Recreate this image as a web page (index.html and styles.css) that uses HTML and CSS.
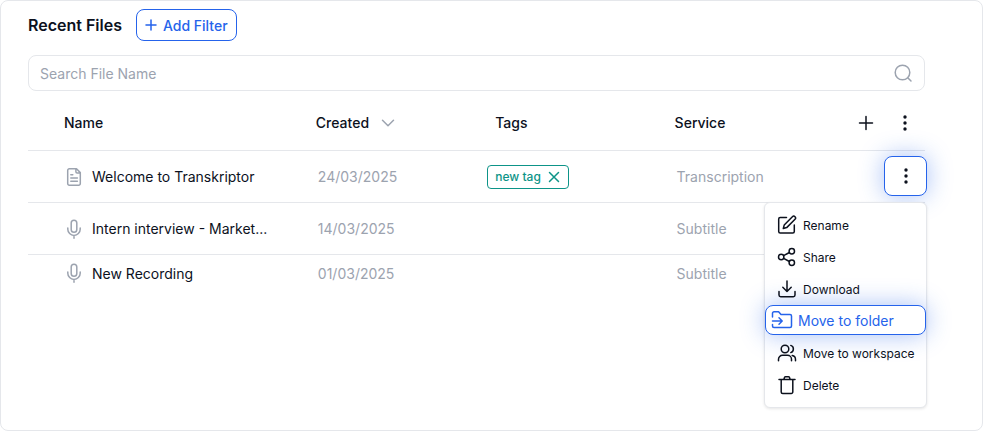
FILE: index.html
```html
<!DOCTYPE html>
<html lang="en">

<head>
    <meta charset="UTF-8">
    <meta name="viewport" content="width=device-width, initial-scale=1.0">
    <title>Recent Files</title>
    <link rel="stylesheet" href="styles.css">
</head>

<body>
    <main class="panel">
        <div class="toolbar">
            <h2>Recent Files</h2>
            <button class="filter-button" type="button">
                <svg class="icon" width="12" height="12" viewBox="0 0 12 12"><path d="M6 1v10M1 6h10"/></svg>
                Add Filter
            </button>
        </div>

        <div class="search">
            <input type="text" id="search" placeholder="Search File Name" aria-label="Search File Name">
            <svg class="icon" width="20" height="20" viewBox="0 0 20 20"><circle cx="9.5" cy="9.5" r="7.3"/><path d="M15 15l3 3"/></svg>
        </div>

        <table class="files">
            <colgroup>
                <col>
                <col class="col-data">
                <col class="col-data">
                <col class="col-data">
                <col class="col-actions">
            </colgroup>
            <thead>
                <tr>
                    <th class="name-head">Name</th>
                    <th>
                        <span class="sort">Created
                            <svg class="icon" width="14" height="8" viewBox="0 0 14 8"><path d="M1.5 1.2L7 6.7l5.5-5.5"/></svg>
                        </span>
                    </th>
                    <th>Tags</th>
                    <th>Service</th>
                    <th class="actions-cell">
                        <div class="actions">
                            <button class="icon-button" type="button" aria-label="Add column">
                                <svg class="icon" width="16" height="16" viewBox="0 0 16 16"><path d="M8 1.5v13M1.5 8h13"/></svg>
                            </button>
                            <button class="icon-button" type="button" aria-label="Table options">
                                <svg class="dots" width="4" height="16" viewBox="0 0 4 16"><circle cx="2" cy="2" r="1.7"/><circle cx="2" cy="8" r="1.7"/><circle cx="2" cy="14" r="1.7"/></svg>
                            </button>
                        </div>
                    </th>
                </tr>
            </thead>
            <tbody>
                <tr>
                    <td class="name-cell">
                        <div class="file">
                            <svg class="icon" width="20" height="20" viewBox="0 0 20 20"><path d="M12.5 1.8H5.3a1.6 1.6 0 0 0-1.6 1.6v13.2a1.6 1.6 0 0 0 1.6 1.6h9.4a1.6 1.6 0 0 0 1.6-1.6V5.6zM11.9 1.8V4.8a1.2 1.2 0 0 0 1.2 1.2h3.2M6.8 7.8h2M6.8 11h6.6M6.8 14.2h6.6"/></svg>
                            <span>Welcome to Transkriptor</span>
                        </div>
                    </td>
                    <td>24/03/2025</td>
                    <td class="tag-cell">
                        <span class="tag">new tag
                            <button type="button" aria-label="Remove tag">
                                <svg class="icon" width="12" height="12" viewBox="0 0 12 12"><path d="M1.5 1.5l9 9M10.5 1.5l-9 9"/></svg>
                            </button>
                        </span>
                    </td>
                    <td>Transcription</td>
                    <td class="actions-cell">
                        <div class="actions">
                            <button class="more-button" type="button" aria-label="File options">
                                <svg class="dots" width="4" height="16" viewBox="0 0 4 16"><circle cx="2" cy="2" r="1.7"/><circle cx="2" cy="8" r="1.7"/><circle cx="2" cy="14" r="1.7"/></svg>
                            </button>
                        </div>
                        <div class="menu">
                            <button type="button">
                                <svg class="icon" width="20" height="20" viewBox="0 0 20 20"><path d="M9.5 2.5H3.2A1.5 1.5 0 0 0 1.7 4v12.5A1.5 1.5 0 0 0 3.2 18h12.6a1.5 1.5 0 0 0 1.5-1.5V10M15.4 1.7a1.8 1.8 0 0 1 2.6 2.6l-8.3 8.3-3.4.9.9-3.4z"/></svg>
                                Rename
                            </button>
                            <button type="button">
                                <svg class="icon" width="20" height="20" viewBox="0 0 20 20"><circle cx="4.2" cy="10" r="2.7"/><circle cx="14.8" cy="4.2" r="2.7"/><circle cx="14.8" cy="15.8" r="2.7"/><path d="M6.6 8.7l5.8-3.2M6.6 11.3l5.8 3.2"/></svg>
                                Share
                            </button>
                            <button type="button">
                                <svg class="icon" width="20" height="20" viewBox="0 0 20 20"><path d="M10 2v10.500M5.800 8.300l4.200 4.200 4.200-4.200M2 12.500v3.600A1.700 1.700 0 0 0 3.700 17.800h12.600a1.700 1.700 0 0 0 1.700-1.700v-3.600"/></svg>
                                Download
                            </button>
                            <button class="active" type="button">
                                <svg class="icon" width="22" height="20" viewBox="0 0 22 20"><path d="M1.5 7V3.3a1.5 1.5 0 0 1 1.5-1.5h4.6L10 4.600h9a1.500 1.500 0 0 1 1.500 1.500v10a1.500 1.500 0 0 1-1.500 1.500H3a1.500 1.500 0 0 1-1.500-1.500V14.500M1.500 11h9.500M8 7.800l3.200 3.200L8 14.200"/></svg>
                                Move to folder
                            </button>
                            <button type="button">
                                <svg class="icon" width="20" height="20" viewBox="0 0 20 20"><circle cx="8" cy="6" r="3.8"/><path d="M1.5 17.8v-1.500a4 4 0 0 1 4-4h5a4 4 0 0 1 4 4v1.500M13.800 2.400a3.800 3.800 0 0 1 0 7.200M15.200 12.400a4 4 0 0 1 3.300 4v1.400"/></svg>
                                Move to workspace
                            </button>
                            <button type="button">
                                <svg class="icon" width="20" height="20" viewBox="0 0 20 20"><path d="M2 4.500h16M4.200 4.500v12.400A1.500 1.500 0 0 0 5.700 18.400h8.600a1.500 1.500 0 0 0 1.500-1.500V4.500M6.800 4.500l.8-2.200a1 1 0 0 1 .9-.6h3a1 1 0 0 1 .9.600l.8 2.200"/></svg>
                                Delete
                            </button>
                        </div>
                    </td>
                </tr>
                <tr>
                    <td class="name-cell">
                        <div class="file">
                            <svg class="icon" width="20" height="20" viewBox="0 0 20 20"><rect x="7.2" y="1.2" width="5.6" height="12" rx="2.8"/><path d="M3.8 9v1.2a6.2 6.2 0 0 0 12.4 0V9M10 16.4v2.8"/></svg>
                            <span>Intern interview - Market...</span>
                        </div>
                    </td>
                    <td>14/03/2025</td>
                    <td></td>
                    <td>Subtitle</td>
                    <td></td>
                </tr>
                <tr>
                    <td class="name-cell">
                        <div class="file">
                            <svg class="icon" width="20" height="20" viewBox="0 0 20 20"><rect x="7.2" y="1.2" width="5.6" height="12" rx="2.8"/><path d="M3.8 9v1.2a6.2 6.2 0 0 0 12.4 0V9M10 16.4v2.8"/></svg>
                            <span>New Recording</span>
                        </div>
                    </td>
                    <td>01/03/2025</td>
                    <td></td>
                    <td>Subtitle</td>
                    <td></td>
                </tr>
            </tbody>
        </table>
    </main>
</body>

</html>
```

FILE: styles.css
```css
* {
    box-sizing: border-box;
}

body {
    margin: 0;
    font-family: Inter, sans-serif;
    font-size: 14px;
    color: #0c111d;
    background-color: #fff;
}

button,
input {
    font: inherit;
    color: inherit;
}

button {
    padding: 0;
    border: none;
    background: none;
    cursor: pointer;
}

.icon {
    flex: none;
    fill: none;
    stroke: currentColor;
    stroke-width: 1.5;
    stroke-linecap: round;
    stroke-linejoin: round;
}

.dots {
    fill: currentColor;
}

.panel {
    min-height: 100vh;
    padding: 8px 57px 20px 27px;
    border: 1px solid #e5e7eb;
    border-radius: 8px;
}

.toolbar {
    display: flex;
    align-items: center;
    gap: 14px;
    margin-bottom: 14px;
}

h2 {
    margin: 0;
    font-size: 16px;
    font-weight: 600;
}

.filter-button {
    display: flex;
    align-items: center;
    gap: 6px;
    height: 32px;
    padding: 0 8px;
    border: 1px solid #2563eb;
    border-radius: 8px;
    color: #2563eb;
    font-weight: 500;
}

.search {
    display: flex;
    align-items: center;
    height: 36px;
    padding: 0 11px;
    border: 1px solid #e5e7eb;
    border-radius: 8px;
    color: #9ca3af;
}

.search input {
    flex: 1;
    min-width: 0;
    padding: 0;
    border: none;
    outline: none;
    background: none;
    color: #0c111d;
}

.search input::placeholder {
    color: #9ca3af;
    opacity: 1;
}

.files {
    width: 100%;
    margin-top: 4px;
    table-layout: fixed;
    border-collapse: separate;
    border-spacing: 0;
}

.col-data {
    width: 20%;
}

.col-actions {
    width: 79px;
}

th,
td {
    height: 52px;
    padding: 0 10px;
    border-bottom: 1px solid #e5e7eb;
    text-align: left;
    color: #9ca3af;
}

th {
    height: 56px;
    padding: 0 8px;
    font-weight: 500;
    color: #0c111d;
}

tbody tr:last-child td {
    height: 36px;
    border-bottom: none;
}

.name-head,
.name-cell {
    padding: 0 0 0 36px;
}

.tag-cell {
    padding: 0;
}

.sort {
    display: flex;
    align-items: center;
    gap: 12px;
}

.sort .icon {
    color: #9ca3af;
}

.file {
    display: flex;
    align-items: center;
    gap: 8px;
    color: #9ca3af;
}

.file span {
    color: #0c111d;
}

.tag {
    display: inline-flex;
    align-items: center;
    gap: 7px;
    height: 24px;
    padding: 0 8px 0 7px;
    border: 1px solid #0d9488;
    border-radius: 4px;
    font-size: 12px;
    font-weight: 500;
    color: #0d9488;
}

.tag button {
    display: flex;
}

.actions-cell {
    position: relative;
    padding: 0;
}

.actions {
    display: flex;
    justify-content: flex-end;
}

.icon-button {
    display: flex;
    align-items: center;
    justify-content: center;
    width: 40px;
    height: 40px;
}

.more-button {
    display: flex;
    align-items: center;
    justify-content: center;
    width: 43px;
    height: 40px;
    margin: 0 -2px 2px 0;
    border: 1px solid #2563eb;
    border-radius: 8px;
    background-color: #fff;
    color: #0c111d;
    box-shadow: 0 0 24px rgba(37, 99, 235, 0.4);
}

/* dropdown opened from the row's options button */
.menu {
    position: absolute;
    top: 100%;
    right: -2px;
    width: 163px;
    padding: 6px 0;
    border: 1px solid #e5e7eb;
    border-radius: 6px;
    background-color: #fff;
    box-shadow: 0 1px 3px rgba(0, 0, 0, 0.1);
}

.menu button {
    display: flex;
    align-items: center;
    gap: 6px;
    width: 100%;
    height: 32px;
    padding: 0 12px;
    font-size: 12px;
    color: #0c111d;
    white-space: nowrap;
}

.menu .active {
    gap: 5px;
    height: 30px;
    margin-bottom: 2px;
    padding: 0 5px;
    border: 1px solid #2563eb;
    border-radius: 8px;
    background-color: #fff;
    font-size: 14px;
    color: #2563eb;
    box-shadow: 0 0 24px rgba(37, 99, 235, 0.4);
}
```
